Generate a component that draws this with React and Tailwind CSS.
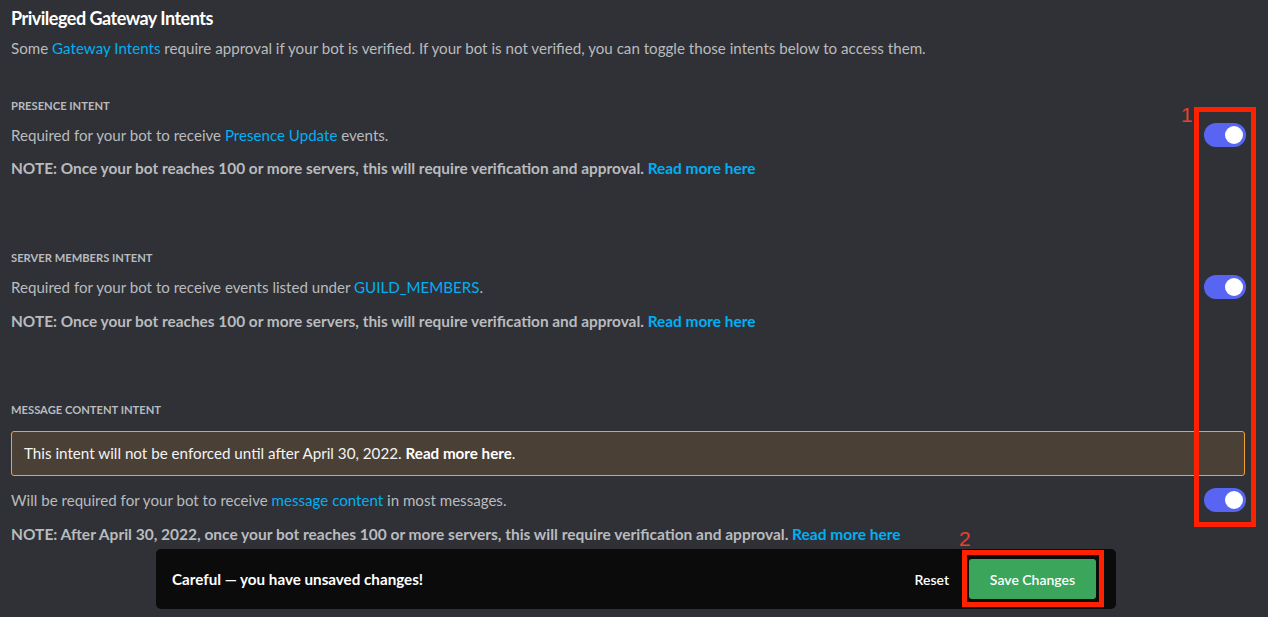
import React from "react";

const font = { fontFamily: "Lato, 'Open Sans', sans-serif" };

function Toggle() {
  return (
    <div className="flex h-6 w-[42px] shrink-0 items-center justify-end rounded-full bg-[#5865f2] pr-[3px]">
      <div className="h-[18px] w-[18px] rounded-full bg-white" />
    </div>
  );
}

function Link({ children }) {
  return <span className="text-[#00aff4]">{children}</span>;
}

function Label({ children }) {
  return (
    <div className="h-4 text-[11.2px] font-bold uppercase leading-4 text-[#b9bbbe]">{children}</div>
  );
}

function Row({ children }) {
  return (
    <div className="flex h-6 items-center justify-between pr-[22px]">
      <div className="text-[15.1px] leading-5 text-[#b9bbbe]">{children}</div>
      <Toggle />
    </div>
  );
}

function Note({ children, className = "" }) {
  return (
    <div className={"font-bold leading-5 text-[#b9bbbe] " + className}>{children}</div>
  );
}

export default function App() {
  return (
    <div
      className="relative h-[617px] w-[1268px] overflow-hidden bg-[#2f3136] pl-[11px] pt-[6px]"
      style={font}
    >
      <div className="h-6 text-[18px] font-bold leading-6 tracking-[-0.5px] text-white">Privileged Gateway Intents</div>
      <div className="mt-[8px] text-[15.15px] leading-5 text-[#b9bbbe]">
        Some <Link>Gateway Intents</Link> require approval if your bot is verified. If your bot is not
        verified, you can toggle those intents below to access them.
      </div>

      <div className="mt-[40px]">
        <Label>Presence Intent</Label>
        <div className="mt-[9px]">
          <Row>
            Required for your bot to receive <Link>Presence Update</Link> events.
          </Row>
        </div>
        <Note className="mt-[11px] text-[15.4px]">
          NOTE: Once your bot reaches 100 or more servers, this will require verification and approval.{" "}
          <Link>Read more here</Link>
        </Note>
      </div>

      <div className="mt-[72px]">
        <Label>Server Members Intent</Label>
        <div className="mt-[9px]">
          <Row>
            Required for your bot to receive events listed under <Link>GUILD_MEMBERS</Link>.
          </Row>
        </div>
        <Note className="mt-[12px] text-[15.4px]">
          NOTE: Once your bot reaches 100 or more servers, this will require verification and approval.{" "}
          <Link>Read more here</Link>
        </Note>
      </div>

      <div className="mt-[71px]">
        <Label>Message Content Intent</Label>
        <div className="mt-[13px] mr-[23px] flex h-[45px] items-center rounded-[3px] border border-[#f0a232] bg-[#4a4036] px-[12px] text-[15.2px] text-[#f2f3f5]">
          This intent will not be enforced until after April 30, 2022.&nbsp;
          <span className="font-bold text-white">Read more here</span>.
        </div>
        <div className="mt-[12px]">
          <Row>
            Will be required for your bot to receive <Link>message content</Link> in most messages.
          </Row>
        </div>
        <Note className="mt-[12px] text-[15.5px]">
          NOTE: After April 30, 2022, once your bot reaches 100 or more servers, this will require verification and
          approval. <Link>Read more here</Link>
        </Note>
      </div>

      {/* Unsaved changes notice */}
      <div className="absolute left-[156px] top-[549px] flex h-[60px] w-[960px] items-center justify-between rounded-[5px] bg-[#0b0b0b] pl-[16px] pr-[20px]">
        <span className="text-[15.2px] font-bold text-white">Careful — you have unsaved changes!</span>
        <div className="flex items-center gap-[20px]">
          <span className="text-[14px] font-semibold text-white">Reset</span>
          <div className="flex h-[40px] w-[127px] items-center justify-center rounded-[3px] bg-[#3ba55c] text-[14px] font-semibold text-white">
            Save Changes
          </div>
        </div>
      </div>

      {/* Annotations */}
      <div className="absolute left-[1194px] top-[107px] h-[420px] w-[62px] border-[5px] border-[#ff2200]" />
      <div
        className="absolute left-[1181px] top-[103px] text-[21px] leading-6 text-[#e8412f]"
        style={{ fontFamily: "'Liberation Sans', sans-serif" }}
      >
        1
      </div>
      <div className="absolute left-[959px] top-[527px] text-[21px] leading-6 text-[#e8412f]"
        style={{ fontFamily: "'Liberation Sans', sans-serif" }}
      >
        2
      </div>
      <div className="absolute left-[962px] top-[550px] h-[57px] w-[142px] border-[5px] border-[#ff2200]" />
    </div>
  );
}
